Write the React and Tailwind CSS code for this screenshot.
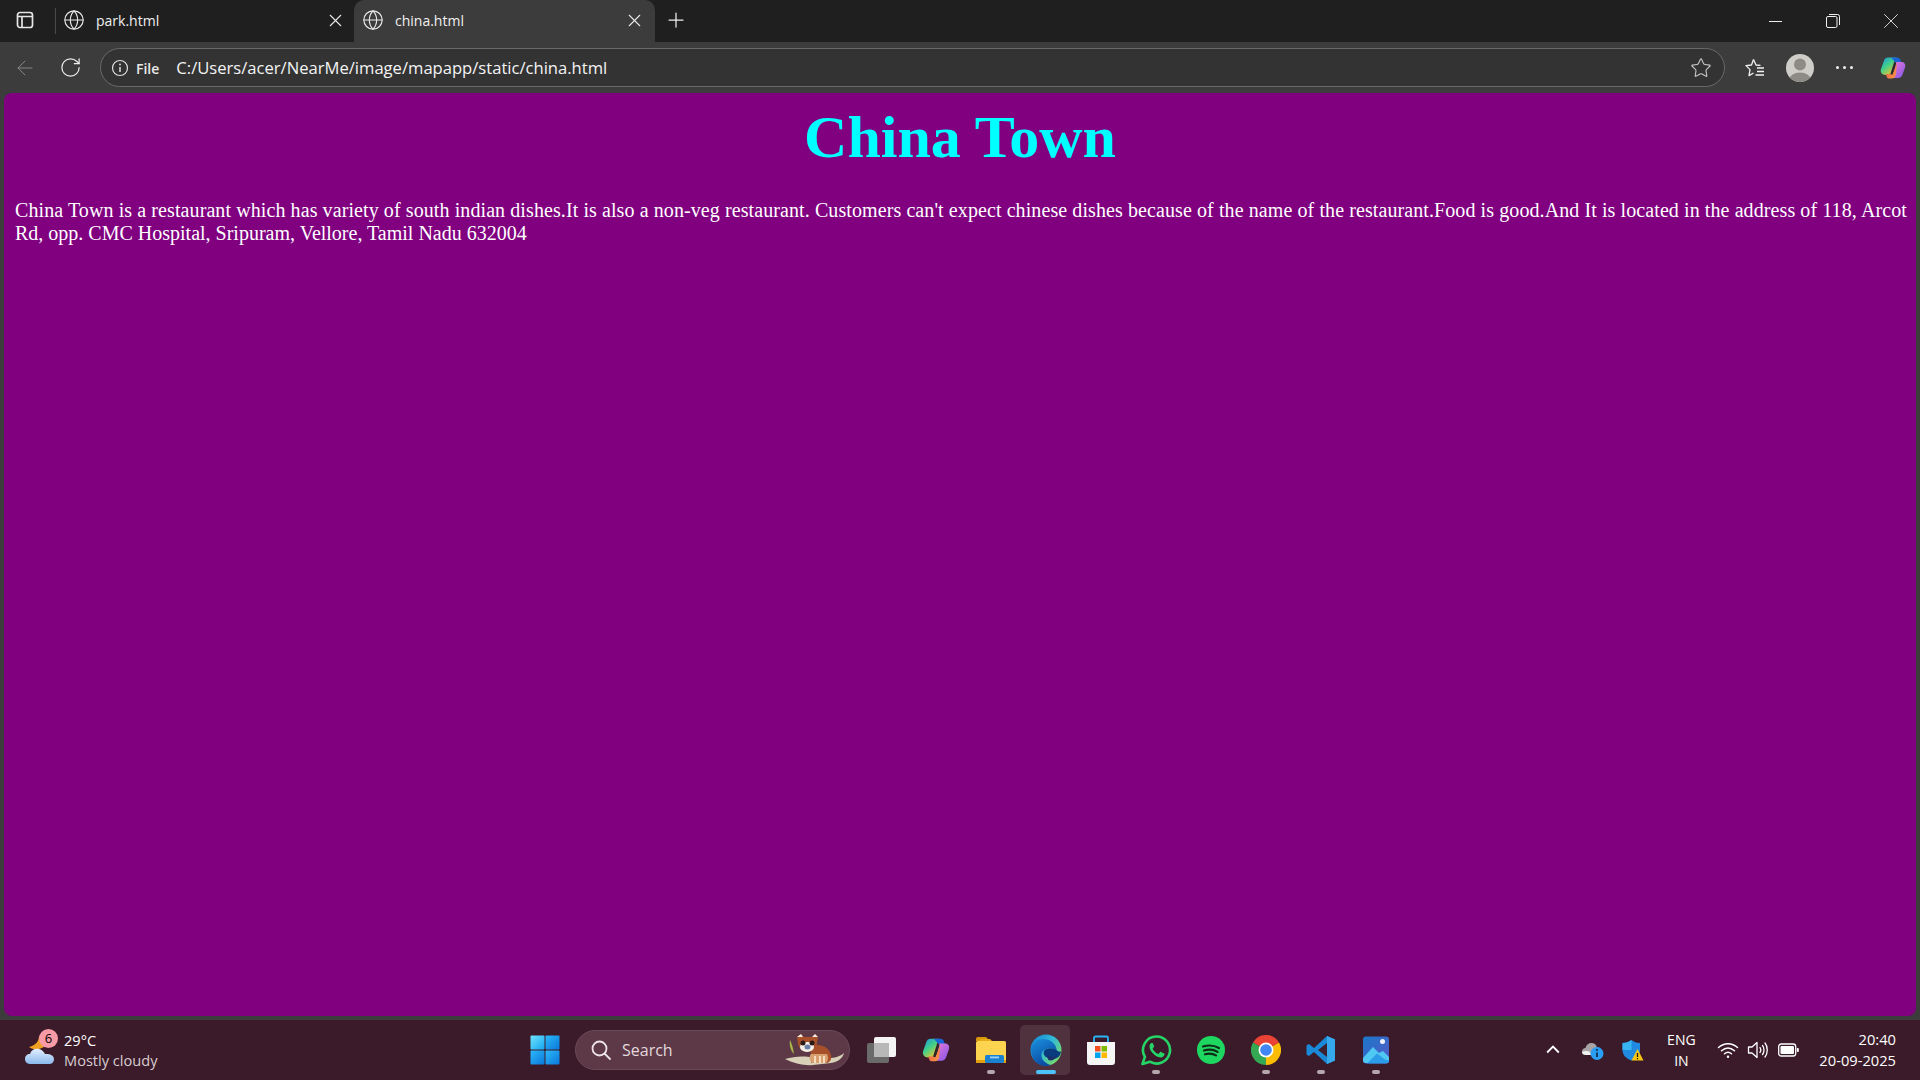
import React from 'react';
import { ArrowLeft, Globe, Plus, RotateCw, Star, X } from 'lucide-react';

const uiFont = "font-['Open_Sans','Noto_Sans',sans-serif]";

function SidebarIcon() {
    return (
        <svg width="20" height="20" viewBox="0 0 20 20" fill="none" stroke="#e6e6e6" strokeWidth="1.7">
            <rect x="2.5" y="2.5" width="15" height="15" rx="2.5" />
            <path d="M2.5 6.5h15M7 6.500V17.500" />
        </svg>
    );
}

function Tab({ title, active }) {
    return (
        <div className={`flex h-full items-center pb-[2px] ${active ? 'w-[301px] rounded-t-[10px] bg-[#3c3c3c] pl-[8px] pr-[10px]' : 'flex-1 pl-[7px] pr-[8px]'}`}>
            <Globe size={22} strokeWidth={1.25} className="shrink-0 text-[#e8e8e8]" />
            <span className="ml-[11px] flex-1 text-[14px] text-[#f0f0f0]">{title}</span>
            <X size={21} strokeWidth={1.25} className="shrink-0 text-[#e8e8e8]" />
        </div>
    );
}

function WindowButton({ children }) {
    return <div className="flex h-full w-[58px] items-center justify-center">{children}</div>;
}

function CopilotIcon({ size = 28 }) {
    return (
        <svg width={size} height={size} viewBox="0 0 28 28">
            <defs>
                <linearGradient id={`cpA${size}`} x1="0" y1="0" x2="0.7" y2="1">
                    <stop offset="0" stopColor="#1e90e8" />
                    <stop offset="0.5" stopColor="#3fd08a" />
                    <stop offset="1" stopColor="#f2c230" />
                </linearGradient>
                <linearGradient id={`cpB${size}`} x1="0" y1="0" x2="0.8" y2="1">
                    <stop offset="0" stopColor="#e878d8" />
                    <stop offset="1" stopColor="#8a58e8" />
                </linearGradient>
                <linearGradient id={`cpC${size}`} x1="0" y1="0" x2="1" y2="1">
                    <stop offset="0" stopColor="#f04a50" />
                    <stop offset="1" stopColor="#f6a040" />
                </linearGradient>
            </defs>
            <path d="M9 3.5h8l-1.5 3-4.5 14.5H6.5C3 21 1 18 2 15L5 6.5C5.7 4.6 7 3.5 9 3.5z" fill={`url(#cpA${size})`} />
            <path d="M12 3.5h6c2 0 3 1 3.6 3L22.5 9H17z" fill="#1a64d8" />
            <path d="M17 8h5.5c3 0 4.5 2.500 3.500 5.500l-2.500 7c-.7 2-2 3.500-4.500 3.500h-5z" fill={`url(#cpB${size})`} />
            <path d="M7 20h6.500L18 9l-1 11c-.5 2.500-1.500 4.500-4.500 4.500H10c-2 0-2.500-2-3-4.500z" fill={`url(#cpC${size})`} />
            <path d="M12.500 20.500L16.500 8.500" stroke="#2a2a2a" strokeWidth="1.800" />
        </svg>
    );
}

function ProfileIcon() {
    return (
        <svg width="28" height="28" viewBox="0 0 28 28">
            <defs>
                <clipPath id="profileClip"><circle cx="14" cy="14" r="14" /></clipPath>
            </defs>
            <circle cx="14" cy="14" r="14" fill="#cfcdc9" />
            <g clipPath="url(#profileClip)" fill="#8e8b87">
                <circle cx="14" cy="10.500" r="6" />
                <ellipse cx="14" cy="26" rx="11" ry="7.500" />
            </g>
        </svg>
    );
}

function FavoritesIcon() {
    return (
        <svg width="22" height="22" viewBox="0 0 22 22" fill="none" stroke="#f2f2f2" strokeWidth="1.300" strokeLinejoin="round">
            <path d="M9.500 2.500L12 8l4.500.4" />
            <path d="M9.500 2.500L7.500 8 2 8.600l4 4-1 6 4.500-2.600" />
            <path d="M13 11h7M13 14.500h7M11.500 18h8.500" />
        </svg>
    );
}

function WindowsLogo() {
    return (
        <svg width="30" height="30" viewBox="0 0 30 30">
            <defs>
                <linearGradient id="winA" x1="0" y1="0" x2="1" y2="1">
                    <stop offset="0" stopColor="#6fe4ff" />
                    <stop offset="1" stopColor="#14a4f0" />
                </linearGradient>
                <linearGradient id="winB" x1="0" y1="0" x2="1" y2="1">
                    <stop offset="0" stopColor="#2cb8fb" />
                    <stop offset="1" stopColor="#0a78d8" />
                </linearGradient>
            </defs>
            <rect x="0.500" y="0.500" width="14" height="14" rx="1" fill="url(#winA)" />
            <rect x="15.500" y="0.500" width="14" height="14" rx="1" fill="url(#winB)" />
            <rect x="0.500" y="15.500" width="14" height="14" rx="1" fill="url(#winB)" />
            <rect x="15.500" y="15.500" width="14" height="14" rx="1" fill="url(#winB)" />
        </svg>
    );
}

function RedPanda() {
    return (
        <svg width="62" height="36" viewBox="0 0 62 36">
            <path d="M1 27c8-2 15-3 24-2l22 1c5 0 11-3 13-5-1 5-6 9-13 10l-18 2c-8 1-20-2-28-6z" fill="#d8d0b8" />
            <path d="M6 8c2 4 3 8 4 14-3-3-5-8-4-14z" fill="#a8b848" />
            <path d="M27 14c8-3 18 0 20 9 1 4-1 7-4 8H27z" fill="#a8502a" />
            <path d="M28 31c-3-3-3-7-1-9h16c2 3 1 7-1 9z" fill="#d8a070" />
            <path d="M31 24v7M36 24v7M40 24v7" stroke="#fff0d8" strokeWidth="1.500" />
            <path d="M13 5l4-3 3 3 8 0 3-3 3 3-1 6c0 5-4 9-9 9s-10-4-10-9z" fill="#a8502a" />
            <path d="M13 5l4-3 2 3zM34 5l-3-3-3 3z" fill="#f0ece4" />
            <ellipse cx="23" cy="15" rx="7" ry="5" fill="#f4f0ea" />
            <circle cx="19" cy="11" r="2.500" fill="#2a1a18" />
            <circle cx="28" cy="11" r="2.500" fill="#2a1a18" />
            <ellipse cx="23.500" cy="15" rx="3" ry="2.500" fill="#6a80a8" />
        </svg>
    );
}

function TaskViewIcon() {
    return (
        <svg width="30" height="30" viewBox="0 0 30 30">
            <rect x="1" y="8" width="22" height="20" rx="2" fill="#6a6a6a" />
            <rect x="8" y="2" width="22" height="20" rx="2" fill="#f4f4f4" />
            <rect x="8" y="8" width="15" height="14" fill="#b8b8b8" />
        </svg>
    );
}

function ExplorerIcon() {
    return (
        <svg width="32" height="28" viewBox="0 0 32 28">
            <path d="M1 3a2 2 0 0 1 2-2h8l4 4H1z" fill="#d8980c" />
            <rect x="1" y="5" width="30" height="22" rx="1.500" fill="#fcd450" />
            <path d="M1 24h30v2a1 1 0 0 1-1 1H2a1 1 0 0 1-1-1z" fill="#e0a010" />
            <path d="M6 3h9l2 2H3z" fill="#e8ac18" />
            <rect x="10" y="19" width="19" height="8" rx="1.500" fill="#1a80d0" />
            <rect x="15" y="20.500" width="9" height="1.800" fill="#9cd4f8" />
        </svg>
    );
}

function EdgeIcon() {
    return (
        <svg width="32" height="32" viewBox="0 0 32 32">
            <defs>
                <linearGradient id="edgeA" x1="0" y1="0" x2="1" y2="0.800">
                    <stop offset="0" stopColor="#0f80d0" />
                    <stop offset="0.500" stopColor="#30b8d8" />
                    <stop offset="1" stopColor="#7ee060" />
                </linearGradient>
                <linearGradient id="edgeB" x1="0" y1="0" x2="0.500" y2="1">
                    <stop offset="0" stopColor="#1a90e0" />
                    <stop offset="1" stopColor="#0a4aa0" />
                </linearGradient>
            </defs>
            <circle cx="16" cy="16" r="15.500" fill="url(#edgeA)" />
            <path d="M1 16C1 9 7 5 13 5c7 0 13 4 14 12-3-3-9-4-13-1-4 3-3 9 1 12 2 2 5 3 6 3-2 .7-3.500 1-5 1C7 32 1 25 1 16z" fill="url(#edgeB)" />
            <path d="M14 17c2-3 8-4 13-.5 2 1.500 4 1.500 4 .5 0 5-4 8-8 8-5 0-11-3-9-8z" fill="#0a3c80" />
            <path d="M18 21c3 3 7 2 9 .5-1 3-4 5-7 5-2 0-3-3-2-5.500z" fill="#1a2f6c" />
        </svg>
    );
}

function StoreIcon() {
    return (
        <svg width="30" height="31" viewBox="0 0 30 31">
            <path d="M8 7V3a1.500 1.500 0 0 1 1.500-1.500h11A1.500 1.500 0 0 1 22 3v4" fill="none" stroke="#29b6f6" strokeWidth="1.800" />
            <path d="M1 7h28v20a3 3 0 0 1-3 3H4a3 3 0 0 1-3-3z" fill="#f6f6f6" />
            <rect x="9" y="11" width="5.500" height="5.500" fill="#f25022" />
            <rect x="15.500" y="11" width="5.500" height="5.500" fill="#7fba00" />
            <rect x="9" y="17.500" width="5.500" height="5.500" fill="#00a4ef" />
            <rect x="15.500" y="17.500" width="5.500" height="5.500" fill="#ffb900" />
        </svg>
    );
}

function WhatsAppIcon() {
    return (
        <svg width="32" height="32" viewBox="0 0 32 32">
            <path d="M16.500 2.500a13.500 13.500 0 0 0-11.600 20.400L2.500 30l7.300-2.300A13.500 13.500 0 1 0 16.500 2.500z" fill="none" stroke="#25d366" strokeWidth="2.600" strokeLinejoin="round" />
            <path d="M11.500 9c-.8 0-2 1.400-2 3.400 0 3 2.200 6 4.500 8 2.500 2.200 5.500 3.400 7.500 3 1.500-.3 2.800-1.500 3-2.800.1-.6 0-1-.3-1.100l-3.300-1.600c-.4-.2-.7-.1-1 .3l-1.200 1.500c-.3.300-.5.300-.9.100-2.200-1-3.900-2.700-5-4.800-.2-.3-.1-.6.1-.8l1-1.200c.2-.3.300-.5.100-.9l-1.400-3.300C12.400 9.200 12 9 11.500 9z" fill="#25d366" />
        </svg>
    );
}

function SpotifyIcon() {
    return (
        <svg width="28" height="28" viewBox="0 0 28 28">
            <circle cx="14" cy="14" r="14" fill="#1ed760" />
            <path d="M6 10.500c5.500-1.600 11.500-1 16 1.500M7 14.500c4.500-1.300 10-.8 13.500 1.400M8 18.300c4-1 8-.6 11 1.100" fill="none" stroke="#102a18" strokeWidth="2.200" strokeLinecap="round" />
        </svg>
    );
}

function ChromeIcon() {
    return (
        <svg width="30" height="30" viewBox="0 0 30 30">
            <path d="M15 15L2 7.500A15 15 0 0 1 28 7.500z" fill="#ea4335" />
            <path d="M15 15l13-7.500A15 15 0 0 1 15 30z" fill="#fbbc04" />
            <path d="M15 15v15A15 15 0 0 1 2 7.500z" fill="#34a853" />
            <circle cx="15" cy="15" r="7.500" fill="#fff" />
            <circle cx="15" cy="15" r="5.800" fill="#4285f4" />
        </svg>
    );
}

function VscodeIcon() {
    return (
        <svg width="30" height="30" viewBox="0 0 30 30">
            <path d="M21 1l8 3.500v21L21 29 8 17l-5 4-2.500-1.500V10.500L3 9l5 4z" fill="#1a8ad8" />
            <path d="M21 1l8 3.500v21L21 29z" fill="#36a8ec" />
            <path d="M21 8v14l-9-7z" fill="#3c2030" />
        </svg>
    );
}

function PhotosIcon() {
    return (
        <svg width="26" height="28" viewBox="0 0 26 28">
            <defs>
                <linearGradient id="photoBg" x1="0" y1="0" x2="1" y2="1">
                    <stop offset="0" stopColor="#1a78c8" />
                    <stop offset="1" stopColor="#5858c8" />
                </linearGradient>
            </defs>
            <rect y="0.500" width="26" height="27" rx="3" fill="url(#photoBg)" />
            <circle cx="19.500" cy="5.500" r="2.500" fill="#f0f4fa" />
            <path d="M0 22l10-11 6 6 4-2 6 6v3a3 3 0 0 1-3 3H3a3 3 0 0 1-3-3z" fill="#50c8f4" />
            <path d="M4 27.500l10-10 8 6 4 1a3 3 0 0 1-3 3z" fill="#2c9ce8" />
        </svg>
    );
}

function WeatherIcon() {
    return (
        <svg width="30" height="30" viewBox="0 0 30 30">
            <defs>
                <linearGradient id="cloudFill" x1="0" y1="0" x2="0" y2="1">
                    <stop offset="0" stopColor="#e4f0ff" />
                    <stop offset="1" stopColor="#8ab8ec" />
                </linearGradient>
            </defs>
            <path d="M14 1c0 5-3 9-10 11 3 2 6 3 10 2 4-1 7-3 7-7 0-3-4-5-7-6z" fill="#f0a020" />
            <path d="M6 29c-4 0-6-2-6-5 0-3 2-5 5-5 1-4 5-6 9-5 3 .5 5 3 6 5 3-.5 9 .5 9 5 0 3-2 5-5 5z" fill="url(#cloudFill)" />
        </svg>
    );
}

function CloudInfoIcon() {
    return (
        <svg width="22" height="20" viewBox="0 0 22 20">
            <path d="M4 15c-2.500 0-4-1.500-4-3.500S1.500 8 3.500 8C4 5 6.500 3 9.500 3c3 0 5 2 5.500 4.500 3 0 4 2 4 4V15z" fill="#a8a4a6" />
            <path d="M0 12c0 2 1.500 3 4 3h5c0-2-1.500-4-4-4-2 0-4 0-5 1z" fill="#f0f0f0" />
            <circle cx="15" cy="13.500" r="6.500" fill="#2a9df4" />
            <path d="M15 12.500v4.500" stroke="#12304a" strokeWidth="1.800" />
            <circle cx="15" cy="10" r="1.100" fill="#12304a" />
        </svg>
    );
}

function ShieldIcon() {
    return (
        <svg width="22" height="22" viewBox="0 0 22 22">
            <path d="M9.500 1c2.500 2 5 3 8.500 3v7c0 5-3.500 8.500-8.500 10.500C4 19.500.5 16 .5 11V4C4 4 7 3 9.500 1z" fill="#1f8ae0" />
            <path d="M9.500 1v10H.5V4C4 4 7 3 9.500 1z" fill="#38b6f4" />
            <path d="M15.500 10l6 11.500h-12z" fill="#f8c513" />
            <path d="M15.500 14v4M15.500 19v1.200" stroke="#1a1a1a" strokeWidth="1.300" />
        </svg>
    );
}

function TrayIcons() {
    return (
        <div className="flex items-center">
            <div className="flex w-[30px] justify-center">
                <svg width="20" height="20" viewBox="0 0 24 24" fill="none" stroke="#fff" strokeWidth="2.200"><path d="M5 15l7-7 7 7" /></svg>
            </div>
            <div className="ml-[10px] flex w-[30px] justify-center"><CloudInfoIcon /></div>
            <div className="ml-[10px] flex w-[30px] justify-center"><ShieldIcon /></div>
            <div className="ml-[10px] w-[46px] text-center text-[14px] leading-[21px] text-white">
                <div>ENG</div>
                <div>IN</div>
            </div>
            <div className="ml-[9px] flex w-[30px] justify-center">
                <svg width="22" height="18" viewBox="0 0 22 18" fill="none" stroke="#fff" strokeWidth="1.500" strokeLinecap="round">
                    <path d="M1.500 6.500c5.500-5 13.500-5 19 0M4.500 9.800c4-3.500 9-3.500 13 0M7.500 12.800c2-1.700 5-1.700 7 0" />
                    <circle cx="11" cy="15.800" r="1.200" fill="#fff" stroke="none" />
                </svg>
            </div>
            <div className="flex w-[30px] justify-center">
                <svg width="22" height="20" viewBox="0 0 22 20" fill="none" stroke="#fff" strokeWidth="1.300" strokeLinecap="round" strokeLinejoin="round">
                    <path d="M1.500 7h3.500l5-4.500v15L5 13H1.500z" />
                    <path d="M13 7.500c1 1.500 1 3.500 0 5M15.500 5.500c2 2.500 2 6.500 0 9M18 3c3 3.500 3 10.500 0 14" />
                </svg>
            </div>
            <div className="flex w-[30px] justify-center">
                <svg width="21" height="14" viewBox="0 0 21 14" fill="none">
                    <rect x="0.700" y="1" width="17" height="12" rx="2.500" stroke="#fff" strokeWidth="1.300" />
                    <rect x="2.500" y="3" width="13.500" height="8" rx="1" fill="#fff" />
                    <rect x="18.800" y="5" width="2" height="4" rx="0.800" fill="#fff" />
                </svg>
            </div>
        </div>
    );
}

function TaskIcon({ children, running, active }) {
    return (
        <div className="relative flex h-[50px] w-[55px] items-center justify-center">
            {active && <div className="absolute inset-y-0 left-[2px] w-[50px] rounded-[5px] bg-white/10" />}
            <div className="relative flex">{children}</div>
            {running && <div className={`absolute bottom-[1px] left-1/2 h-[4px] -translate-x-1/2 rounded-full ${active ? 'w-[20px] bg-[#4cc2ff]' : 'w-[8px] bg-[#b5a6ac]'}`} />}
        </div>
    );
}

export default function App() {
    return (
        <div className={`flex h-screen w-[1920px] flex-col overflow-hidden bg-[#3c3c3c] ${uiFont}`}>

            {/* browser tabs */}
            <div className="flex h-[42px] shrink-0 items-stretch bg-[#1f1f1f]">
                <div className="flex w-[55px] items-center justify-center pr-[6px] pb-[2px]">
                    <SidebarIcon />
                </div>
                <div className="my-[8px] w-px bg-[#4a4a4a]" />
                <div className="flex w-[298px] items-center">
                    <Tab title="park.html" />
                </div>
                <Tab title="china.html" active />
                <div className="flex w-[42px] items-center justify-center pb-[2px]">
                    <Plus size={24} strokeWidth={1.25} className="text-[#f0f0f0]" />
                </div>
                <div className="flex-1" />
                <WindowButton><div className="h-px w-[13px] bg-[#f0f0f0]" /></WindowButton>
                <WindowButton>
                    <svg width="14" height="14" viewBox="0 0 14 14" fill="none" stroke="#f0f0f0" strokeWidth="1">
                        <rect x="0.500" y="2.500" width="10.500" height="11" rx="1.500" />
                        <path d="M3 .5h8.500a2 2 0 0 1 2 2V11" />
                    </svg>
                </WindowButton>
                <WindowButton><X size={26} strokeWidth={0.8} className="text-[#f0f0f0]" /></WindowButton>
            </div>

            {/* address bar */}
            <div className="flex h-[51px] shrink-0 items-center">
                <div className="flex w-[50px] justify-center">
                    <ArrowLeft size={24} strokeWidth={1} className="text-[#858585]" />
                </div>
                <div className="flex w-[40px] justify-center">
                    <RotateCw size={23} strokeWidth={1.25} className="text-[#f0f0f0]" />
                </div>
                <div className="ml-[10px] flex h-[39px] w-[1625px] items-center rounded-full border border-[#6a6a6a] bg-[#333333] pl-[10px] pr-[12px]">
                    <svg width="18" height="18" viewBox="0 0 18 18" fill="none" stroke="#e0e0e0" strokeWidth="1.200">
                        <circle cx="9" cy="9" r="7.500" />
                        <path d="M9 8v5" strokeWidth="1.500" />
                        <circle cx="9" cy="5.500" r="0.900" fill="#e0e0e0" stroke="none" />
                    </svg>
                    <span className="ml-[7px] pt-px text-[14px] font-semibold text-[#e8e8e8]">File</span>
                    <span className="ml-[17px] flex-1 pt-px text-[16.600px] text-[#f4f4f4]">C:/Users/acer/NearMe/image/mapapp/static/china.html</span>
                    <Star size={22} strokeWidth={1.25} className="text-[#c4c4c4]" />
                </div>
                <div className="ml-[19px] flex w-[22px] justify-center"><FavoritesIcon /></div>
                <div className="ml-[20px] flex w-[28px] justify-center"><ProfileIcon /></div>
                <div className="ml-[18px] flex w-[24px] items-center justify-center gap-[4px]">
                    <span className="h-[3px] w-[3px] rounded-full bg-[#f0f0f0]" />
                    <span className="h-[3px] w-[3px] rounded-full bg-[#f0f0f0]" />
                    <span className="h-[3px] w-[3px] rounded-full bg-[#f0f0f0]" />
                </div>
                <div className="ml-[23px] flex"><CopilotIcon /></div>
            </div>

            {/* page content */}
            <div className="min-h-0 flex-1 px-[4px]">
                <div className="h-[923px] rounded-[8px] bg-[#800080] px-[11px] font-['Liberation_Serif',serif]">
                    <h1 className="pt-[10px] text-center text-[60px] leading-[69px] font-bold text-[#00ffff]">China Town</h1>
                    <p className="mt-[27px] text-[20px] leading-[23px] whitespace-nowrap text-white">
                        <span className="block tracking-[0.09px]">China Town is a restaurant which has variety of south indian dishes.It is also a non-veg restaurant. Customers can't expect chinese dishes because of the name of the restaurant.Food is good.And It is located in the address of 118, Arcot</span>
                        <span className="block">Rd, opp. CMC Hospital, Sripuram, Vellore, Tamil Nadu 632004</span>
                    </p>
                </div>
            </div>

            {/* windows taskbar */}
            <div className="grid h-[60px] shrink-0 grid-cols-[1fr_auto_1fr] items-center bg-[#3b1b29]">
                <div className="flex items-center pl-[25px]">
                    <div className="relative flex">
                        <WeatherIcon />
                        <span className="absolute left-[14px] top-[-6px] flex h-[19px] w-[19px] items-center justify-center rounded-full bg-[#f99ba6] text-[13px] text-black">6</span>
                    </div>
                    <div className="ml-[9px] text-[14.600px] leading-[20px]">
                        <div className="text-white">29°C</div>
                        <div className="text-[#d8ccd2]">Mostly cloudy</div>
                    </div>
                </div>

                <div className="flex items-center">
                    <TaskIcon><WindowsLogo /></TaskIcon>
                    <div className="mx-[3px] flex h-[40px] w-[275px] items-center rounded-full border border-[#6b4a58] bg-[#5d3947] pl-[14px] pr-[3px]">
                        <svg width="22" height="22" viewBox="0 0 22 22" fill="none" stroke="#eee4e8" strokeWidth="1.800" strokeLinecap="round">
                            <circle cx="9.500" cy="9.500" r="7" />
                            <path d="M14.500 14.500l5.500 5.500" />
                        </svg>
                        <span className="ml-[10px] flex-1 text-[16px] text-[#e4d8dd]">Search</span>
                        <RedPanda />
                    </div>
                    <TaskIcon><TaskViewIcon /></TaskIcon>
                    <TaskIcon><CopilotIcon size={30} /></TaskIcon>
                    <TaskIcon running><ExplorerIcon /></TaskIcon>
                    <TaskIcon running active><EdgeIcon /></TaskIcon>
                    <TaskIcon><StoreIcon /></TaskIcon>
                    <TaskIcon running><WhatsAppIcon /></TaskIcon>
                    <TaskIcon><SpotifyIcon /></TaskIcon>
                    <TaskIcon running><ChromeIcon /></TaskIcon>
                    <TaskIcon running><VscodeIcon /></TaskIcon>
                    <TaskIcon running><PhotosIcon /></TaskIcon>
                </div>

                <div className="flex items-center justify-end pr-[24px]">
                    <TrayIcons />
                    <div className="ml-[16px] text-right text-[14.700px] leading-[21px] text-white">
                        <div>20:40</div>
                        <div>20-09-2025</div>
                    </div>
                </div>
            </div>
        </div>
    );
}
